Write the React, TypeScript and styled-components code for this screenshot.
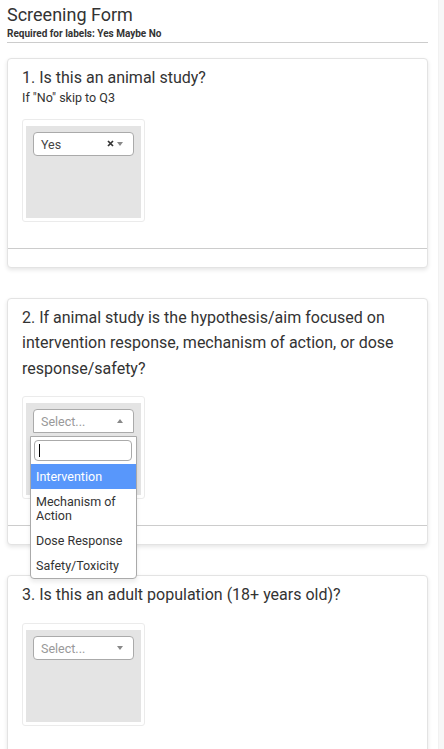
import { FC } from 'react';
import styled, { createGlobalStyle } from 'styled-components';

const GlobalStyle = createGlobalStyle`
  html, body {
    margin: 0;
    padding: 0;
    background: #fff;
  }
  body {
    font-family: Roboto, "Liberation Sans", Arial, sans-serif;
    color: #333;
  }
  * {
    box-sizing: border-box;
  }
`;

interface Option {
  label: string;
  active?: boolean;
}

const ANIMAL_AIMS: Option[] = [
  { label: 'Intervention', active: true },
  { label: 'Mechanism of Action' },
  { label: 'Dose Response' },
  { label: 'Safety/Toxicity' },
];

const ClearIcon: FC = () => (
  <svg width="7" height="7" viewBox="0 0 7 7">
    <path d="M1 1L6 6M6 1L1 6" stroke="#333" strokeWidth="1.7" />
  </svg>
);

const ArrowIcon: FC<{ up?: boolean }> = ({ up }) => (
  <svg width="6" height="4" viewBox="0 0 6 4">
    <polygon points={up ? '0,4 6,4 3,0' : '0,0 6,0 3,4'} fill="#888" />
  </svg>
);

interface SelectProps {
  value?: string;
  open?: boolean;
  options?: Option[];
}

const SelectField: FC<SelectProps> = ({ value, open, options = [] }) => (
  <Field>
    <FieldInner>
      <Select $open={open}>
        <Value $placeholder={!value}>{value ?? 'Select...'}</Value>
        {value && (
          <Clear>
            <ClearIcon />
          </Clear>
        )}
        <ArrowIcon up={open} />
        {open && (
          <Dropdown>
            <Search>
              <Caret />
            </Search>
            <Options>
              {options.map((opt) => (
                <OptionItem key={opt.label} $active={opt.active}>
                  {opt.label}
                </OptionItem>
              ))}
            </Options>
          </Dropdown>
        )}
      </Select>
    </FieldInner>
  </Field>
);

const App: FC = () => {
  return (
    <>
      <GlobalStyle />
      <Page>
        <Main>
          <Header>
            <Title>Screening Form</Title>
            <Required>Required for labels: Yes Maybe No</Required>
          </Header>

          <Card>
            <CardBody>
              <Question>1. Is this an animal study?</Question>
              <Hint>If "No" skip to Q3</Hint>
              <SelectField value="Yes" />
            </CardBody>
            <CardFooter />
          </Card>

          <Card>
            <CardBody>
              <Question>
                2. If animal study is the hypothesis/aim focused on intervention
                response, mechanism of action, or dose response/safety?
              </Question>
              <SelectField open options={ANIMAL_AIMS} />
            </CardBody>
            <CardFooter />
          </Card>

          <Card>
            <CardBody>
              <Question>3. Is this an adult population (18+ years old)?</Question>
              <SelectField />
            </CardBody>
            <CardFooter />
          </Card>
        </Main>
        <SideStrip />
      </Page>
    </>
  );
};

// Styles
const Page = styled.div`
  display: flex;
  min-height: 100vh;
`;

const Main = styled.main`
  flex: 1;
  padding: 0 10px 0 7px;
`;

const SideStrip = styled.aside`
  width: 6px;
  background: #f7f7f7;
  border-left: 1px solid #f1f1f1;
`;

const Header = styled.header`
  padding: 4px 0 2px;
  border-bottom: 1px solid #ccc;
  margin-bottom: 15px;
`;

const Title = styled.h1`
  margin: 0;
  font-size: 18px;
  line-height: 21px;
  font-weight: 400;
  color: #333;
`;

const Required = styled.div`
  margin-top: 3px;
  font-size: 10px;
  line-height: 12px;
  font-weight: 700;
  color: #333;
`;

const Card = styled.section`
  margin-bottom: 30px;
  background: #fff;
  border: 1px solid #e3e3e3;
  border-radius: 4px;
  box-shadow: 0 2px 4px rgba(0, 0, 0, 0.1);
`;

const CardBody = styled.div`
  padding: 6px 14px 26px;
`;

const CardFooter = styled.div`
  height: 19px;
  border-top: 1px solid #ccc;
`;

const Question = styled.h3`
  margin: 0;
  font-size: 16px;
  line-height: 25.6px;
  font-weight: 400;
  color: #333;
`;

const Hint = styled.div`
  font-size: 12.5px;
  line-height: 13px;
  color: #333;
`;

const Field = styled.div`
  margin-top: 15px;
  width: 123px;
  padding: 6px 3px 3px;
  border: 1px solid #ebebeb;
  border-radius: 3px;
  background: #fff;
`;

const FieldInner = styled.div`
  height: 92px;
  padding: 6px 7px;
  background: #e4e4e4;
`;

const Select = styled.div<{ $open?: boolean }>`
  position: relative;
  display: flex;
  align-items: center;
  height: 24px;
  padding: 0 10px 0 7px;
  background: #fff;
  border: 1px solid #aaa;
  border-radius: ${(p) => (p.$open ? '4px 4px 0 0' : '4px')};
  font-size: 12.5px;
`;

const Value = styled.span<{ $placeholder?: boolean }>`
  flex: 1;
  padding-top: 1px;
  color: ${(p) => (p.$placeholder ? '#999' : '#444')};
`;

const Clear = styled.span`
  display: flex;
  margin-right: 3px;
`;

const Dropdown = styled.div`
  position: absolute;
  top: calc(100% + 4px);
  left: -4px;
  width: 107px;
  z-index: 10;
  padding-top: 3px;
  background: #fff;
  border: 1px solid #aaa;
  border-radius: 0 0 4px 4px;
  box-shadow: 0 3px 4px rgba(0, 0, 0, 0.08);
`;

const Search = styled.div`
  display: flex;
  align-items: center;
  height: 21px;
  margin: 0 4px 0 3px;
  padding-left: 4px;
  border: 1px solid #aaa;
  border-radius: 4px;
`;

const Caret = styled.span`
  width: 1px;
  height: 13px;
  background: #000;
`;

const Options = styled.ul`
  list-style: none;
  margin: 3px 0 0;
  padding: 0;
`;

const OptionItem = styled.li<{ $active?: boolean }>`
  padding: 5.5px 5px;
  font-size: 12.5px;
  line-height: 14px;
  color: ${(p) => (p.$active ? '#fff' : '#333')};
  background: ${(p) => (p.$active ? '#5897fb' : 'transparent')};
`;

export default App;
